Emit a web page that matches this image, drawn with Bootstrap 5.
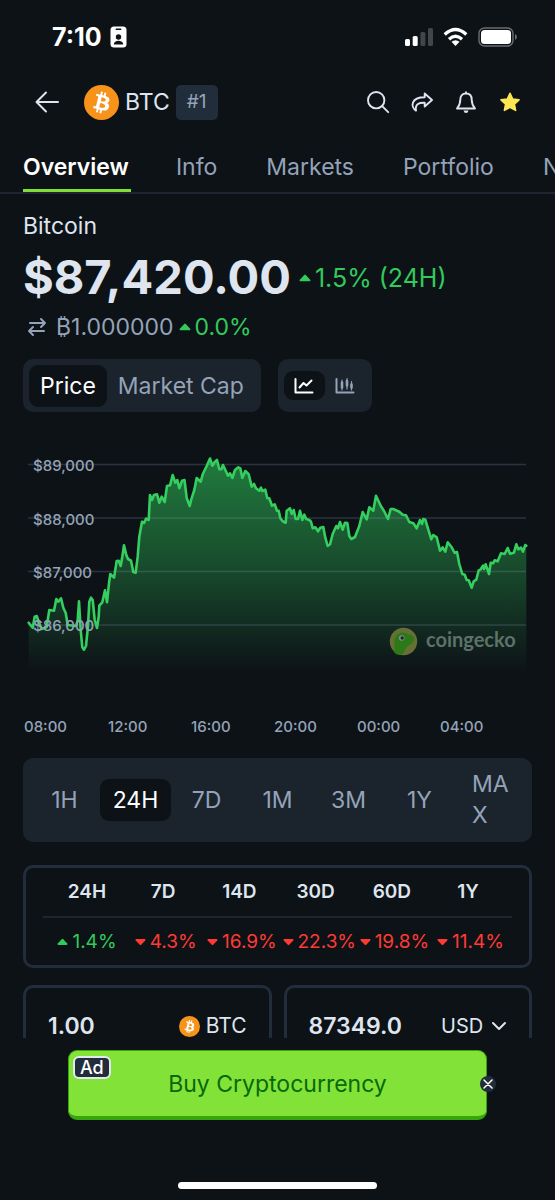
<!DOCTYPE html>
<html lang="en">
<head>
<meta charset="utf-8">
<meta name="viewport" content="width=device-width, initial-scale=1">
<title>Bitcoin (BTC) price</title>
<link href="https://cdn.jsdelivr.net/npm/bootstrap@5.3.0/dist/css/bootstrap.min.css" rel="stylesheet">
<style>
  :root { --ink:#dfe5ef; --muted-ink:#94a3b8; --panel:#1b232d; --edge:#212d3b; --up:#32ca5b; --down:#ff3a33; --bg:#0d1217; }
  body { background:var(--bg); color:var(--ink); font-family:Inter,"Liberation Sans",sans-serif; font-size:23px; line-height:30px; }
  svg { display:block; flex:none; }
  button { font:inherit; color:inherit; background:none; border:0; padding:0; }
  .gutter { padding-left:23px; padding-right:23px; }
  .status { height:74px; padding:0 38px 0 52px; color:#fff; font-size:25px; font-weight:700; }
  .topbar { height:56px; }
  .back { margin:0 25px 0 12px; }
  .ticker { padding:0 6px; }
  .rank { width:42px; height:35px; border-radius:5px; background:#212d3b; color:var(--muted-ink); font-size:19px; }
  .tool { width:44px; height:44px; display:grid; place-items:center; }
  .tabs { height:64px; gap:49px; padding-left:23px; overflow:hidden; border-bottom:2px solid #1c2530; white-space:nowrap; }
  .tabs a { color:var(--muted-ink); text-decoration:none; padding-top:22px; }
  .tabs a.active { color:#fff; font-weight:600; border-bottom:3px solid #80df37; padding-right:2px; margin-right:-4px; }
  .scroller { min-height:0; overflow:hidden; padding-top:17px; }
  .price { font-size:47px; line-height:58px; font-weight:700; margin-top:7px; }
  .delta { color:var(--up); }
  .day-delta { font-size:25px; padding-top:8px; }
  .satline { margin-top:6px; gap:5px; color:var(--muted-ink); }
  .modes { margin-top:17px; gap:17px; }
  .seg { background:var(--panel); border-radius:10px; height:53px; padding:0 6px; }
  .seg button { color:var(--muted-ink); border-radius:9px; height:42px; }
  .seg button.on { background:var(--bg); color:#fff; }
  .seg .wordy { padding:0 11px; }
  .seg .picto { width:41px; height:29px; display:grid; place-items:center; }
  .chart { width:100%; height:auto; margin-top:28px; }
  .chart text { font-size:15px; font-weight:500; fill:var(--muted-ink); }
  .chart .brand { font:700 20px Lato,sans-serif; fill:#5d7269; }
  .ranges { background:var(--panel); border-radius:10px; height:84px; margin-top:18px; padding:0 6px; }
  .ranges button { flex:1 1 60px; min-width:0; height:42px; border-radius:9px; color:var(--muted-ink); }
  .ranges button.on { background:var(--bg); color:#fff; }
  .ranges button.wrapped { height:62px; line-height:31px; text-align:left; padding:0 13px 0 17px; word-break:break-all; }
  .outlined { border:3px solid var(--edge); border-radius:10px; }
  .changes { margin-top:23px; height:103px; padding:0 17px; }
  .changes table { width:100%; table-layout:fixed; text-align:center; font-size:19px; }
  .changes th { height:49px; font-weight:600; border-bottom:2px solid #1c2530; padding:0; }
  .changes td { height:48px; padding:0 0 0 5px; color:var(--down); white-space:nowrap; }
  .changes td svg { display:inline-block; vertical-align:2px; margin-right:4px; }
  .changes td.up { color:var(--up); }
  .changes tr > :first-child { padding-left:6px; }
  .changes tr > :last-child { padding-right:6px; }
  .changes .side { width:82px; }
  .converter { margin-top:17px; gap:12px; }
  .converter .outlined { flex:1 1 0; min-width:0; height:82px; padding:0 22px; }
  .converter input { flex:1 1 0; min-width:0; background:none; border:0; padding:0; color:var(--ink); font-weight:600; }
  .converter select { appearance:none; border:0; color:var(--ink); font-size:20px; padding:0 23px 0 0; background:url("data:image/svg+xml,%3Csvg xmlns='http://www.w3.org/2000/svg' width='16' height='10' fill='none' stroke='%23dfe5ef' stroke-width='2' stroke-linecap='round' stroke-linejoin='round'%3E%3Cpath d='M2 2l6 6 6-6'/%3E%3C/svg%3E") right center no-repeat; }
  .coin-name { font-size:21px; margin-left:6px; }
  .dock { height:162px; padding:12px 68px 11px; }
  .cta { height:70px; border-radius:9px; border:1px solid #36a60c; border-bottom-width:4px; background:#82e238; color:#08690b; }
  .ad-tag { position:absolute; left:5px; top:6px; padding:0 5px; border:2px solid #e2e8f0; border-radius:6px; background:#212d3b; color:#fff; font-size:18px; line-height:19px; font-weight:500; }
  .dismiss { position:absolute; right:-9px; top:26px; width:16px; height:16px; border-radius:50%; background:#212d3b; display:grid; place-items:center; }
  .homebar { width:199px; height:7px; border-radius:4px; background:#fff; }
</style>
</head>
<body>
<svg width="0" height="0" class="position-absolute" aria-hidden="true">
  <symbol id="coin" viewBox="0 0 32 32"><circle cx="16" cy="16" r="16" fill="#f7931a"/><path fill="#fff" d="M23.189 14.02c.314-2.096-1.283-3.223-3.465-3.975l.708-2.84-1.728-.43-.69 2.765c-.454-.114-.92-.22-1.385-.326l.695-2.783L15.596 6l-.708 2.839c-.376-.086-.746-.17-1.104-.26l.002-.009-2.384-.595-.46 1.846s1.283.294 1.256.312c.7.175.826.638.805 1.006l-.806 3.235c.048.012.11.03.18.057l-.183-.045-1.13 4.532c-.086.212-.303.531-.793.41.018.025-1.256-.313-1.256-.313l-.858 1.978 2.25.561c.418.105.828.215 1.231.318l-.715 2.872 1.727.43.708-2.84c.472.127.93.245 1.378.357l-.706 2.828 1.728.43.715-2.866c2.948.558 5.164.333 6.097-2.333.752-2.146-.037-3.385-1.588-4.192 1.13-.26 1.98-1.003 2.207-2.538zm-3.95 5.538c-.533 2.147-4.148.986-5.32.695l.95-3.805c1.172.293 4.929.872 4.37 3.11zm.535-5.569c-.487 1.953-3.495.96-4.47.717l.86-3.45c.975.243 4.118.696 3.61 2.733z"/></symbol>
  <symbol id="rise" viewBox="0 0 12 8"><path fill="currentColor" d="M5.2.9Q6 .2 6.800 .9L11.200 5.700Q12 7.200 10.500 7.200H1.500Q0 7.200 .8 5.700Z"/></symbol>
  <symbol id="fall" viewBox="0 0 12 8"><path fill="currentColor" d="M5.200 7.100Q6 7.800 6.800 7.100L11.200 2.300Q12 .8 10.500 .8H1.500Q0 .8 .8 2.300Z"/></symbol>
</svg>
<div class="vh-100 d-flex flex-column overflow-hidden">
  <div class="status d-flex align-items-center flex-shrink-0">
    <span>7:10</span>
    <svg class="ms-2" width="17" height="22" viewBox="0 0 17 22"><rect x=".5" y=".5" width="16" height="21" rx="3.500" fill="#fff"/><rect x="5.500" y="2.500" width="6" height="1.600" rx=".8" fill="#0d1217"/><circle cx="8.500" cy="11" r="2.700" fill="#0d1217"/><path d="M3.800 18.500c0-5 9.400-5 9.400 0z" fill="#0d1217"/></svg>
    <div class="d-flex align-items-center ms-auto">
      <svg width="28" height="18" viewBox="0 0 28 18"><g fill="#fff"><rect y="11" width="5" height="7" rx="1.500"/><rect x="7.700" y="8" width="5" height="10" rx="1.500"/></g><g fill="#424549"><rect x="15.400" y="4" width="5" height="14" rx="1.500"/><rect x="23" width="5" height="18" rx="1.500"/></g></svg>
      <svg class="mx-2" width="29" height="20" viewBox="0 0 29 20"><g fill="none" stroke="#fff" stroke-width="3.300"><path d="M3.700 7.500Q14.500-2.500 25.300 7.500"/><path d="M8 12.300Q14.500 6.300 21 12.300"/></g><path fill="#fff" d="M14.500 19l-4-4.200q4-3.300 8 0z"/></svg>
      <svg width="39" height="20" viewBox="0 0 39 20"><rect x="1" y="1" width="34" height="18" rx="5.500" fill="none" stroke="#696d71" stroke-width="1.400"/><rect x="3" y="3" width="30" height="14" rx="3.500" fill="#fff"/><path d="M37 7v6q2-1 2-3t-2-3z" fill="#696d71"/></svg>
    </div>
  </div>

  <header class="topbar gutter d-flex align-items-center flex-shrink-0">
    <button class="back" type="button" aria-label="Back"><svg width="24" height="24" viewBox="0 0 24 24" fill="none" stroke="#dfe5ef" stroke-width="2" stroke-linecap="round" stroke-linejoin="round"><path d="M23 12H1.500M11 2.500L1.500 12 11 21.500"/></svg></button>
    <svg width="35" height="35"><use href="#coin"/></svg>
    <span class="ticker">BTC</span>
    <span class="rank d-flex align-items-center justify-content-center">#1</span>
    <div class="d-flex ms-auto">
      <button class="tool" type="button" aria-label="Search"><svg width="24" height="24" viewBox="0 0 24 24" fill="none" stroke="#dfe5ef" stroke-width="1.900" stroke-linecap="round"><circle cx="10.200" cy="10.200" r="8.200"/><path d="M16.200 16.200l6 6"/></svg></button>
      <button class="tool" type="button" aria-label="Share"><svg width="24" height="24" viewBox="0 0 24 24" fill="none" stroke="#dfe5ef" stroke-width="1.900" stroke-linejoin="round"><path d="M14.700 3.500L22 10l-7.300 6.500v-3.700C9.500 12.600 4.800 13.500 6 20.600 .5 17 .5 7.200 14.700 7.200z"/></svg></button>
      <button class="tool" type="button" aria-label="Alerts"><svg width="24" height="24" viewBox="0 0 24 24" fill="none" stroke="#dfe5ef" stroke-width="1.900" stroke-linejoin="round"><path d="M12 3.500c-4 0-5.700 3-5.700 6.200 0 4.500-1 6-3.300 8.800h18c-2.300-2.800-3.300-4.300-3.300-8.800 0-3.200-1.700-6.200-5.700-6.200zM12 1.500v2"/><path d="M9.500 20.500h5q-.5 2.500-2.500 2.500t-2.500-2.500z" fill="#dfe5ef" stroke="none"/></svg></button>
      <button class="tool" type="button" aria-label="Favourite"><svg width="24" height="24" viewBox="0 0 24 24"><path fill="#fde554" stroke="#fde554" stroke-width="1.600" stroke-linejoin="round" d="M12 3.300l2.700 5.700 6.300.8-4.600 4.300 1.200 6.300L12 17.300l-5.600 3.100 1.200-6.300L3 9.800 9.300 9z"/></svg></button>
    </div>
  </header>

  <nav class="tabs d-flex flex-shrink-0">
    <a class="active" href="#overview">Overview</a><a href="#info">Info</a><a href="#markets">Markets</a><a href="#portfolio">Portfolio</a><a href="#news">News</a>
  </nav>

  <main class="scroller gutter flex-grow-1" id="overview">
    <div>Bitcoin</div>
    <div class="d-flex align-items-center">
      <span class="price">$87,420.00</span>
      <span class="delta day-delta d-flex align-items-center ms-2"><svg class="me-1" width="12" height="8"><use href="#rise"/></svg>1.5% (24H)</span>
    </div>
    <div class="satline d-flex align-items-center">
      <svg class="ms-1 me-1" width="20" height="20" viewBox="0 0 20 20" fill="none" stroke="#94a3b8" stroke-width="2" stroke-linecap="round" stroke-linejoin="round"><path d="M3 6h15M14 2l4 4-4 4M17 14H2M6 10l-4 4 4 4"/></svg>
      <span>₿1.000000</span>
      <span class="delta d-flex align-items-center"><svg class="me-1" width="12" height="8"><use href="#rise"/></svg>0.0%</span>
    </div>

    <div class="modes d-flex">
      <div class="seg d-flex align-items-center">
        <button class="wordy on" type="button">Price</button><button class="wordy" type="button">Market Cap</button>
      </div>
      <div class="seg d-flex align-items-center">
        <button class="picto on" type="button" aria-label="Line chart"><svg width="20" height="20" viewBox="0 0 20 20" fill="none" stroke="#fff" stroke-width="2" stroke-linecap="round" stroke-linejoin="round"><path d="M1.500 3v13.500h17M5.500 11.500l4-4.500 3 2.500 5-5"/></svg></button>
        <button class="picto" type="button" aria-label="Candlestick chart"><svg width="20" height="20" viewBox="0 0 20 20" fill="none" stroke="#94a3b8" stroke-width="2" stroke-linecap="round" stroke-linejoin="round"><path d="M1.500 3v13.500h17"/><path stroke-width="1.200" d="M7 4v10M12 2.500v10.500M16.500 5.500v8.500"/><path stroke-width="2.600" d="M7 6.500v5M12 5v4.500M16.500 8.500v3"/></svg></button>
      </div>
    </div>

    <svg class="chart" viewBox="23 440 509 300" role="img" aria-label="Bitcoin price over 24 hours">
      <defs><linearGradient id="fade" gradientUnits="userSpaceOnUse" x1="0" y1="458" x2="0" y2="672"><stop offset="0" stop-color="#2fc75a" stop-opacity=".58"/><stop offset=".5" stop-color="#2fc75a" stop-opacity=".32"/><stop offset="1" stop-color="#2fc75a" stop-opacity="0"/></linearGradient></defs>
      <g id="area"></g>
      <path d="M28 464.500H526M28 518H526M28 571.500H526M28 625H526" stroke="#94a3c8" stroke-opacity=".22" stroke-width="1.500"/>
      <path id="trace" fill="none" stroke="#34cf5f" stroke-width="2.600" stroke-linejoin="round" stroke-linecap="round"/>
      <text x="33" y="471">$89,000</text><text x="33" y="525">$88,000</text><text x="33" y="578">$87,000</text><text x="33" y="631">$86,000</text>
      <circle cx="403.500" cy="641.500" r="13.700" fill="#666f36"/>
      <path d="M394 652c2-5-1-10 1-14 3-7 10-6 13-4 3 1 6 2 6 5 0 5-6 6-8 9-2 4-3 6-6 7q-4 0-6-3z" fill="#2c7a17"/>
      <circle cx="401.700" cy="638" r="2.800" fill="#7d918a"/><circle cx="402.200" cy="638" r="1.700" fill="#172b20"/>
      <text class="brand" x="426" y="647">coingecko</text>
      <g><text x="24" y="732">08:00</text><text x="108" y="732">12:00</text><text x="191" y="732">16:00</text><text x="274" y="732">20:00</text><text x="357" y="732">00:00</text><text x="440" y="732">04:00</text></g>
    </svg>

    <div class="ranges d-flex align-items-center">
      <button type="button">1H</button><button class="on" type="button">24H</button><button type="button">7D</button><button type="button">1M</button><button type="button">3M</button><button type="button">1Y</button><button class="wrapped" type="button">MAX</button>
    </div>

    <div class="changes outlined">
      <table>
        <colgroup><col class="side"><col><col><col><col><col class="side"></colgroup>
        <thead><tr><th>24H</th><th>7D</th><th>14D</th><th>30D</th><th>60D</th><th>1Y</th></tr></thead>
        <tbody><tr>
          <td class="up"><svg width="11" height="8"><use href="#rise"/></svg>1.4%</td>
          <td><svg width="11" height="8"><use href="#fall"/></svg>4.3%</td>
          <td><svg width="11" height="8"><use href="#fall"/></svg>16.9%</td>
          <td><svg width="11" height="8"><use href="#fall"/></svg>22.3%</td>
          <td><svg width="11" height="8"><use href="#fall"/></svg>19.8%</td>
          <td><svg width="11" height="8"><use href="#fall"/></svg>11.4%</td>
        </tr></tbody>
      </table>
    </div>

    <div class="converter d-flex">
      <div class="outlined d-flex align-items-center">
        <input type="text" value="1.00" aria-label="BTC amount">
        <svg width="21" height="21"><use href="#coin"/></svg><span class="coin-name">BTC</span>
      </div>
      <div class="outlined d-flex align-items-center">
        <input type="text" value="87349.0" aria-label="USD amount">
        <select aria-label="Currency"><option>USD</option></select>
      </div>
    </div>
  </main>

  <footer class="dock d-flex flex-column flex-shrink-0 justify-content-between">
    <div class="position-relative">
      <button class="cta w-100" type="button">Buy Cryptocurrency</button>
      <span class="ad-tag">Ad</span>
      <button class="dismiss" type="button" aria-label="Close ad"><svg width="10" height="10" viewBox="0 0 10 10" stroke="#fff" stroke-width="1.500" stroke-linecap="round"><path d="M1 1l8 8M9 1L1 9"/></svg></button>
    </div>
    <div class="homebar align-self-center"></div>
  </footer>
</div>
<script src="https://cdn.jsdelivr.net/npm/bootstrap@5.3.0/dist/js/bootstrap.bundle.min.js"></script>
<script>
  // 24 hours of price samples as x,y pairs in chart units
  const samples = `28.7,622.7 32.7,627.7 34.7,616.7 36.7,616 38.7,621.7 41.7,629 46.7,627 49.3,610 54,610.7 56.3,599 58.3,601.7 61,598.3 63.3,607.7 65.7,613 67.7,625 76,626 77.7,620 79,601.3 80.7,630 82.3,647.3 84,649.7 86,646 88,626 89.3,601.7 91,597.7 92.7,600 94.7,620 97,628 98.7,616.7 99.3,605.7 102.3,602.3 105,590.3 107,602.3 109,583.3 110.3,574 114,577.7 116.7,561 118.7,560.7 120.7,566 122.3,556.7 124,545.3 126.3,555 128,559 131,560.7 133.3,572 135.7,572.7 137.7,556.7 139.3,536.7 142,521.7 144,523 146,518.7 148.7,520 150,495 152,500 154,495 157,494.3 159.3,502.7 161.7,496.7 164.7,502 167,486 170,485.3 172.7,475 175.3,482.7 177.3,480 179.3,488.3 182,480.7 184.5,480 186.7,498 189.7,506 191.3,499.3 194.3,490 196.7,478 200.7,481.7 202.7,474.3 206.7,466 210,458.500 212.3,465.7 214.7,462 217,460 219.3,469.3 221.3,469.3 223,465 225.7,470.7 228,475.7 230,473.3 232.3,478 235,470 238.3,467.3 240.3,468.3 242.3,478 245.3,471 248.7,474.3 251.7,486.7 254,484 256,488.3 259.3,490.7 261,487.7 262.3,491 265.3,489.7 267.3,498.3 269.3,498.3 272,505.7 274.7,504.3 277,510.7 278.7,510.7 280.3,518.3 282.7,521.3 285.7,522.7 286.7,510.7 290,508.3 291.7,514 293.7,510 295.7,519 298,519 300,510.7 302.3,520 304.3,514.7 306.3,519 309.3,520 311,521.7 312.7,528.3 315.3,527.3 318,531.3 320.3,527.7 323.3,527 325.3,537.7 327.7,546 330,544.3 332.7,534 336.3,526 338,528.3 340,522 342.7,529.7 345,522.7 347.3,523 349.3,536 351.3,539 355,537 359.3,526 362.7,512 366.7,519.3 369.3,507.3 373.3,510.7 376,495.7 380.7,505.7 384,511 388,519 390.7,509 393.3,509 399.3,511.7 402.7,514.7 406,515.3 409.3,522 413.3,523.3 416.7,528.3 420,520 422,524 423.3,519 425.3,519.7 427.7,527.7 431.3,539.3 433.3,535 436.7,537.3 440,550.7 442.7,547.3 445.3,551.7 447.7,542.3 451.7,547.3 454.7,553 457,552 459.3,564 462.3,574 464.7,574.7 466.7,580 468.7,580.3 471.7,587.7 473.7,581.3 476.3,579.7 478.7,570.3 480.7,569.3 483,565.7 484,569 485.7,564.3 489,574 490.7,562.7 493.3,563.3 494.7,560.3 497.7,561.3 501,553.3 504.7,554 507.7,548 510,553.7 514,552.7 516.3,544.3 518.3,549.3 521,547.7 523,551.7 525.3,545 526.3,545.7`;
  const line = 'M' + samples.split(' ').join('L');
  document.getElementById('trace').setAttribute('d', line);
  document.getElementById('area').innerHTML = `<path fill="url(#fade)" d="${line}V672H28.7Z"/>`;
</script>
</body>
</html>
